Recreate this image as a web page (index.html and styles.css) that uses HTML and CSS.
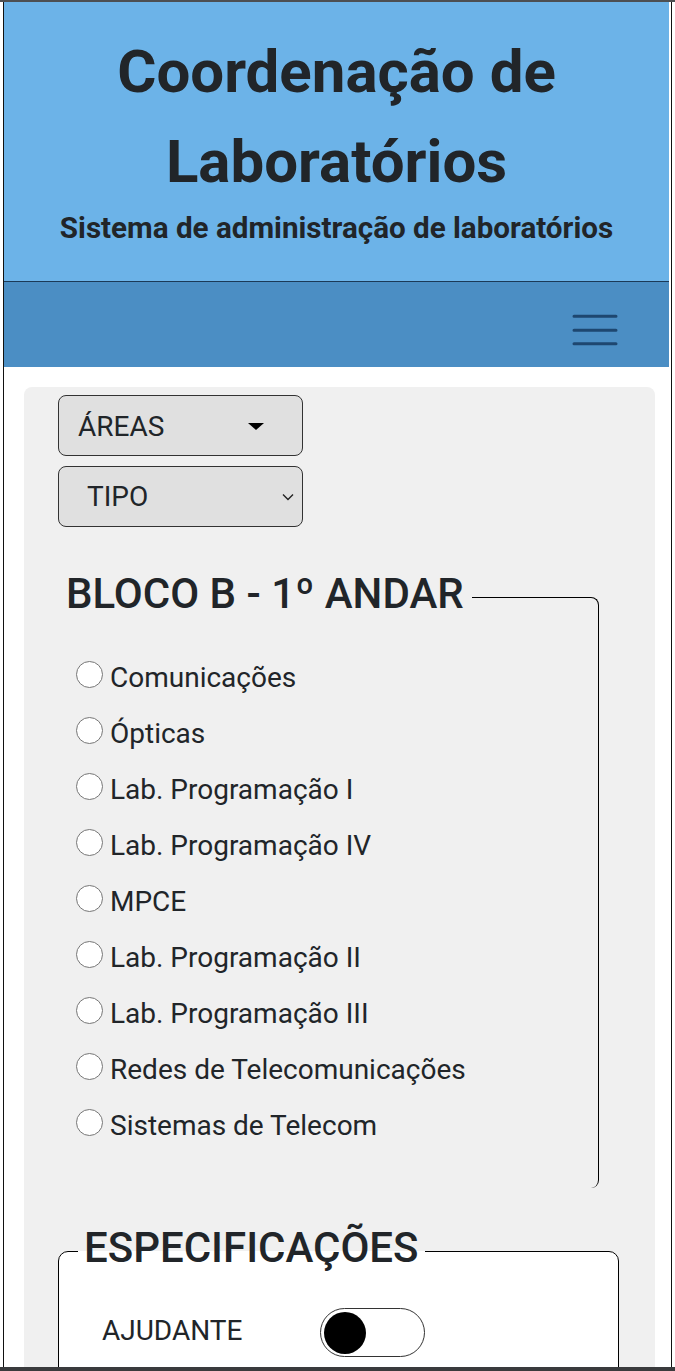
FILE: index.html
```html
<!DOCTYPE html>
<html lang="pt-BR">
<head>
<meta charset="utf-8">
<title>Coordenação de Laboratórios</title>
<link rel="stylesheet" href="styles.css">
</head>
<body>
<div class="frame">
  <div class="topbar"></div>
  <div class="screen">
    <header class="masthead">
      <h1 class="title">Coordenação de Laboratórios</h1>
      <p class="subtitle">Sistema de administração de laboratórios</p>
    </header>
    <nav class="navbar">
      <button class="burger" type="button" aria-label="Menu">
        <svg width="46" height="44" viewBox="0 0 46 44"><path d="M2 13.2H44M2 27.2H44M2 40.8H44" stroke="#1e4770" stroke-width="3" stroke-linecap="round" fill="none"/></svg>
      </button>
    </nav>
    <main class="card">
      <div class="filters">
        <button class="dropdown" type="button">ÁREAS<span class="caret"></span></button>
        <div class="select">TIPO<svg class="chev" width="12" height="8" viewBox="0 0 12 8"><path d="M1 1.5L6 6.5L11 1.5" stroke="#222" stroke-width="1.4" fill="none"/></svg></div>
      </div>
      <fieldset class="bloco">
        <legend>BLOCO B - 1º ANDAR</legend>
        <ul class="options">
          <li><label><span class="radio"></span>Comunicações</label></li>
          <li><label><span class="radio"></span>Ópticas</label></li>
          <li><label><span class="radio"></span>Lab. Programação I</label></li>
          <li><label><span class="radio"></span>Lab. Programação IV</label></li>
          <li><label><span class="radio"></span>MPCE</label></li>
          <li><label><span class="radio"></span>Lab. Programação II</label></li>
          <li><label><span class="radio"></span>Lab. Programação III</label></li>
          <li><label><span class="radio"></span>Redes de Telecomunicações</label></li>
          <li><label><span class="radio"></span>Sistemas de Telecom</label></li>
        </ul>
      </fieldset>
      <fieldset class="specs">
        <legend>ESPECIFICAÇÕES</legend>
        <div class="spec-row">
          <span class="spec-label">AJUDANTE</span>
          <span class="toggle"><span class="knob"></span></span>
        </div>
      </fieldset>
    </main>
  </div>
  <div class="bottombar"></div>
</div>
</body>
</html>
```
FILE: styles.css
```css
* { box-sizing: border-box; }
html, body { margin: 0; padding: 0; background: #fff; }
body {
  height: 1371px;
  overflow: hidden;
  font-family: Roboto, "Liberation Sans", sans-serif;
  color: #212529;
}
.frame {
  height: 1371px;
  display: flex;
  flex-direction: column;
}
.topbar { height: 2px; background: #4d4f52; flex: none; }
.bottombar { height: 4px; background: #3a3b3d; flex: none; }
.screen {
  flex: 1;
  min-height: 0;
  overflow: hidden;
  margin-left: 3px;
  width: 669px;
  border-left: 1px solid #111;
  border-right: 1px solid #111;
}
.masthead {
  height: 280px;
  margin-right: 2px;
  background: #6cb3e8;
  border-bottom: 1px solid #1b3a58;
  text-align: center;
  padding-top: 25px;
}
.title {
  margin: 0;
  font-size: 60px;
  line-height: 90px;
  font-weight: 700;
}
.subtitle {
  margin: 2px 0 0;
  font-size: 29.6px;
  line-height: 39px;
  font-weight: 700;
}
.navbar {
  height: 85px;
  margin-right: 2px;
  background: #4b8ec4;
  display: flex;
  justify-content: flex-end;
  align-items: center;
  padding-right: 51px;
}
.burger {
  border: 0;
  padding: 0;
  background: none;
  display: block;
}
.burger svg { display: block; }
.card {
  margin: 20px 16px 0 20px;
  background: #f0f0f0;
  border-radius: 8px;
  padding: 8px 0 200px 34px;
}
.filters {
  display: flex;
  flex-direction: column;
  gap: 10px;
  align-items: flex-start;
}
.dropdown, .select {
  width: 245px;
  height: 61px;
  background: #e0e0e0;
  border: 1px solid #333;
  border-radius: 8px;
  font-family: Roboto, "Liberation Sans", sans-serif;
  font-size: 28px;
  color: #212529;
  display: flex;
  align-items: center;
}
.dropdown {
  padding: 2px 0 0 19px;
}
.caret {
  margin-left: 84px;
  width: 0;
  height: 0;
  border-left: 8px solid transparent;
  border-right: 8px solid transparent;
  border-top: 7px solid #000;
}
.select {
  padding: 0 0 0 28px;
}
.chev { margin-left: auto; margin-right: 8px; }
.bloco {
  margin: 42px 0 0 8px;
  width: 533px;
  min-inline-size: 0;
  padding: 0;
  border: 0;
  border-top: 1px solid #000;
  border-right: 1px solid #000;
  border-radius: 0 8px 8px 0;
}
.bloco legend, .specs legend {
  font-size: 42px;
  font-weight: 500;
  line-height: normal;
  color: #212529;
}
.bloco legend { padding: 0 8px 8px 0; }
.options {
  list-style: none;
  margin: 0;
  padding: 23px 0 35px 10px;
}
.options li { height: 56px; }
.options label {
  height: 56px;
  display: flex;
  align-items: center;
  font-size: 28px;
  color: #212529;
}
.radio {
  width: 27px;
  height: 27px;
  border: 1.5px solid #767676;
  border-radius: 50%;
  background: #fff;
  margin: 0 7px 5px 0;
  flex: none;
}
.specs {
  margin: 35px 0 0 0;
  width: 561px;
  min-inline-size: 0;
  padding: 0 0 60px 19px;
  border: 1px solid #000;
  border-radius: 10px;
  background: #fff;
}
.specs legend { padding: 0 6px 8px; }
.spec-row {
  display: flex;
  align-items: center;
  margin-top: 28px;
  padding-left: 24px;
  height: 49px;
}
.spec-label {
  width: 218px;
  font-size: 28px;
  padding-bottom: 4px;
}
.toggle {
  width: 105px;
  height: 49px;
  border: 1px solid #333;
  border-radius: 25px;
  background: #fff;
  display: flex;
  align-items: center;
  padding-left: 3px;
}
.knob {
  width: 42px;
  height: 42px;
  border-radius: 50%;
  background: #000;
}
```
